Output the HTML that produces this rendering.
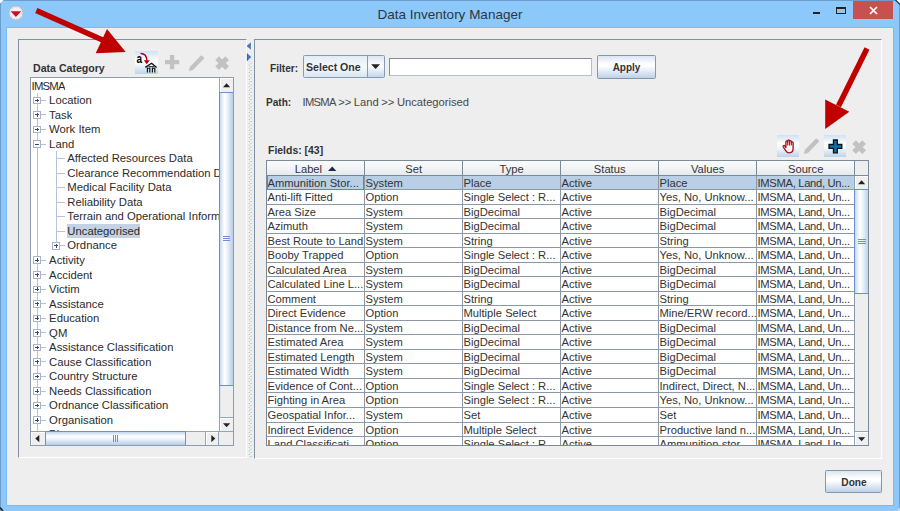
<!DOCTYPE html>
<html><head><meta charset="utf-8"><title>Data Inventory Manager</title>
<style>
html,body{margin:0;padding:0;}
body{width:900px;height:511px;overflow:hidden;background:#8dc8fa;font-family:"Liberation Sans",sans-serif;font-size:11.2px;color:#2b2b2b;}
#win{position:relative;width:900px;height:511px;overflow:hidden;background:#8dc8fa;}
.abs{position:absolute;background-clip:padding-box;}
.b{font-weight:bold;font-size:11.2px;white-space:nowrap;transform-origin:left center;}
.bt{display:inline-block;transform-origin:center center;}
#content{left:7px;top:28px;width:885.9px;height:476.5px;background:#eeeeee;box-shadow:0 0 0 1px #7fb8ee;}
.panel{border-top:1px solid #8090a4;border-left:1px solid #8090a4;border-right:1px solid #fff;border-bottom:1px solid #fff;box-sizing:border-box;}
.trow{position:absolute;left:0;height:14.53px;line-height:14.53px;white-space:nowrap;}
.tl{font-size:11.3px;position:absolute;height:14.53px;line-height:14.53px;white-space:nowrap;overflow:hidden;}
.btn{box-sizing:border-box;border:1px solid #8496ac;border-radius:1.5px;background:linear-gradient(#dbe6f2 0%,#ffffff 38%,#ffffff 46%,#bdd1e8 100%);text-align:center;font-weight:bold;color:#333;}
.ibtn{background:linear-gradient(#cfe0f2 0%,#ffffff 40%,#ffffff 50%,#bdd3ea 100%);}
.cell{position:absolute;height:14.53px;line-height:14.2px;white-space:nowrap;overflow:hidden;box-sizing:border-box;padding-left:0.8px;color:#333;}
.src{letter-spacing:-0.3px;}
.hd{position:absolute;height:14.8px;line-height:16px;text-align:center;color:#333;box-sizing:border-box;}
</style></head><body><div id="win">

<div class="abs" style="left:0;top:0;width:900px;height:511px;box-sizing:border-box;border:1px solid #6b9ccb;border-bottom:none;"></div>
<div class="abs" style="left:0;top:6.5px;width:900px;height:16px;line-height:16px;text-align:center;font-size:13.5px;color:#2c3642;">Data Inventory Manager</div>
<svg class="abs" style="left:8.3px;top:5.3px" width="16" height="16" viewBox="0 0 16 16"><circle cx="8" cy="8" r="7" fill="#f3f3f3" stroke="#b5b5b5" stroke-width="0.8"/><circle cx="8" cy="8" r="5.6" fill="none" stroke="#d0d0d0" stroke-width="1" stroke-dasharray="1.2 1.2"/><path d="M2.6 6.3 H13.2 L7.9 12.1 Z" fill="#c8102e"/></svg>
<div class="abs" style="left:812.7px;top:12px;width:7.3px;height:2px;background:#222;"></div>
<div class="abs" style="left:836px;top:6.5px;width:9.6px;height:7.5px;box-sizing:border-box;border:1px solid #222;border-top:2px solid #222;"></div>
<div class="abs" style="left:852.7px;top:0.5px;width:40.6px;height:18px;background:#c75050;"></div>
<svg class="abs" style="left:868.5px;top:6px" width="9" height="9" viewBox="0 0 9 9"><path d="M1 1 L8 8 M8 1 L1 8" stroke="#fff" stroke-width="1.7"/></svg>
<svg class="abs" style="left:0;top:0" width="900" height="511" viewBox="0 0 900 511"><path d="M0 0 H3.6 L0 3.6 Z" fill="#fff"/><path d="M900 0 H896.4 L900 3.6 Z" fill="#fff"/><path d="M895.5 0 L900 4.5" stroke="#333" stroke-width="1.2"/><path d="M0 507.5 L3 511" stroke="#222" stroke-width="1.6"/><path d="M900 507.5 L897 511 H900 Z" fill="#ccd6e0"/></svg>
<div id="content" class="abs"></div>
<div class="abs panel" style="left:18px;top:39px;width:229px;height:419px;"></div>
<div class="abs panel" style="left:254px;top:39px;width:627.5px;height:419.5px;"></div>
<svg class="abs" style="left:246px;top:40px" width="8" height="418" viewBox="0 0 8 418">
<defs><pattern id="dots" width="3.64" height="3.64" patternUnits="userSpaceOnUse"><rect x="0" y="0" width="0.95" height="0.95" fill="#ffffff"/><rect x="1.82" y="1.82" width="0.95" height="0.95" fill="#ffffff"/><rect x="0.91" y="0.91" width="0.95" height="0.95" fill="#8d98a8"/><rect x="2.73" y="2.73" width="0.95" height="0.95" fill="#8d98a8"/></pattern></defs>
<rect x="2.4" y="9.5" width="3.7" height="408" fill="url(#dots)"/>
<rect x="0.8" y="2.4" width="4.6" height="19" fill="#eeeeee"/>
<path d="M4.9 2.9 L4.9 9.8 L1 6.3 Z" fill="#4674c6"/><path d="M1.4 13.6 L1.4 20.8 L5.3 17.1 Z" fill="#4674c6"/>
<path d="M4.9 2.9 L1 6.3" stroke="#2a3a5a" stroke-width="0.7"/><path d="M1.4 13.6 L1.4 20.8" stroke="#2a3a5a" stroke-width="0.7"/></svg>
<div class="abs b" style="left:33.2px;top:60.6px;height:14px;line-height:14px;color:#333;transform:scaleX(0.946);">Data Category</div>
<div class="abs ibtn" style="left:134.8px;top:50.9px;width:23.2px;height:23.4px;"></div>
<svg class="abs" style="left:134.4px;top:50.9px" width="24" height="24" viewBox="0 0 24 24">
<text transform="translate(2.4 12) scale(0.8 1)" font-family="Liberation Sans, sans-serif" font-weight="bold" font-size="12.5" fill="#000">a</text>
<path d="M6.6 2.4 C10.6 2.3 12.9 5.2 12.9 9.6" stroke="#b3000c" stroke-width="1.5" fill="none"/>
<path d="M9.8 9.2 L15.8 9.2 L12.7 13.2 Z" fill="#b3000c"/>
<path d="M11.3 16.4 L17.6 12.3 L22.6 16.4" stroke="#111" stroke-width="1.3" fill="none"/>
<path d="M14.6 15.6 H20.2" stroke="#111" stroke-width="0.9"/>
<path d="M13.4 16.6 V21.4 M15.8 16.6 V21.4 M18.4 16.6 V21.4 M20.8 16.6 V21.4 M13.4 17.2 H15.8 M18.4 17.2 H20.8" stroke="#111" stroke-width="1.15" fill="none"/>
</svg>
<svg class="abs" style="left:164.8px;top:55.3px;overflow:visible" width="14.2" height="14.2"><path d="M4.97 0.00 L9.23 0.00 L9.23 4.97 L14.20 4.97 L14.20 9.23 L9.23 9.23 L9.23 14.20 L4.97 14.20 L4.97 9.23 L0.00 9.23 L0.00 4.97 L4.97 4.97 Z" fill="#c2c2c2"/></svg>
<svg class="abs" style="left:188.9px;top:70.7px;overflow:visible" width="2" height="2"><path d="M0 0 L3.4 -2.20 L19.20 -2.20 Q20.00 -2.20 20.00 -1.40 L20.00 1.40 Q20.00 2.20 19.20 2.20 L3.4 2.20 Z" fill="#c2c2c2" transform="rotate(-46)"/></svg>
<svg class="abs" style="left:215.2px;top:55.6px;overflow:visible" width="14.2" height="14.2"><path d="M4.56 0.00 L9.69 0.00 L9.69 4.56 L14.25 4.56 L14.25 9.69 L9.69 9.69 L9.69 14.25 L4.56 14.25 L4.56 9.69 L0.00 9.69 L0.00 4.56 L4.56 4.56 Z" fill="#c2c2c2" transform="rotate(45 7.12 7.12)"/></svg>
<div class="abs" style="left:30px;top:77.1px;width:204px;height:368.8px;box-sizing:border-box;border:1px solid #8c9db3;background:#fff;overflow:hidden;" id="treepane">
<div class="abs" style="left:0;top:0;width:187.8px;height:353.4px;overflow:hidden;">
<div class="abs" style="left:5.5px;top:15.08px;width:1px;height:360.00px;background:#b2c3dc;"></div>
<div class="abs" style="left:24.5px;top:73.20px;width:1px;height:94.44px;background:#b2c3dc;"></div>
<div class="tl" style="left:0.5px;top:0.55px;letter-spacing:-0.75px;">IMSMA</div>
<div class="tl" style="left:18.1px;top:15.08px;">Location</div>
<div class="abs" style="left:6.0px;top:21.84px;width:8.5px;height:1px;background:#b2c3dc;"></div>
<div class="abs" style="left:2.2px;top:18.54px;width:7.6px;height:7.6px;box-sizing:border-box;border:1px solid #a9b3c6;background:#fff;"></div>
<div class="abs" style="left:4.1px;top:21.84px;width:3.8px;height:1px;background:#36477c;"></div>
<div class="abs" style="left:5.5px;top:20.45px;width:1px;height:3.8px;background:#36477c;"></div>
<div class="tl" style="left:18.1px;top:29.61px;">Task</div>
<div class="abs" style="left:6.0px;top:36.38px;width:8.5px;height:1px;background:#b2c3dc;"></div>
<div class="abs" style="left:2.2px;top:33.08px;width:7.6px;height:7.6px;box-sizing:border-box;border:1px solid #a9b3c6;background:#fff;"></div>
<div class="abs" style="left:4.1px;top:36.38px;width:3.8px;height:1px;background:#36477c;"></div>
<div class="abs" style="left:5.5px;top:34.98px;width:1px;height:3.8px;background:#36477c;"></div>
<div class="tl" style="left:18.1px;top:44.14px;">Work Item</div>
<div class="abs" style="left:6.0px;top:50.90px;width:8.5px;height:1px;background:#b2c3dc;"></div>
<div class="abs" style="left:2.2px;top:47.60px;width:7.6px;height:7.6px;box-sizing:border-box;border:1px solid #a9b3c6;background:#fff;"></div>
<div class="abs" style="left:4.1px;top:50.90px;width:3.8px;height:1px;background:#36477c;"></div>
<div class="abs" style="left:5.5px;top:49.50px;width:1px;height:3.8px;background:#36477c;"></div>
<div class="tl" style="left:18.1px;top:58.67px;">Land</div>
<div class="abs" style="left:6.0px;top:65.43px;width:8.5px;height:1px;background:#b2c3dc;"></div>
<div class="abs" style="left:2.2px;top:62.13px;width:7.6px;height:7.6px;box-sizing:border-box;border:1px solid #a9b3c6;background:#fff;"></div>
<div class="abs" style="left:4.1px;top:65.43px;width:3.8px;height:1px;background:#36477c;"></div>
<div class="tl" style="left:36.3px;top:73.20px;">Affected Resources Data</div>
<div class="abs" style="left:25.0px;top:79.96px;width:9px;height:1px;background:#b2c3dc;"></div>
<div class="tl" style="left:36.3px;top:87.73px;">Clearance Recommendation Data</div>
<div class="abs" style="left:25.0px;top:94.49px;width:9px;height:1px;background:#b2c3dc;"></div>
<div class="tl" style="left:36.3px;top:102.26px;">Medical Facility Data</div>
<div class="abs" style="left:25.0px;top:109.02px;width:9px;height:1px;background:#b2c3dc;"></div>
<div class="tl" style="left:36.3px;top:116.79px;">Reliability Data</div>
<div class="abs" style="left:25.0px;top:123.55px;width:9px;height:1px;background:#b2c3dc;"></div>
<div class="tl" style="left:36.3px;top:131.32px;">Terrain and Operational Information</div>
<div class="abs" style="left:25.0px;top:138.08px;width:9px;height:1px;background:#b2c3dc;"></div>
<div class="tl" style="left:36.3px;top:145.85px; background:#c3d3e5;">Uncategorised</div>
<div class="abs" style="left:25.0px;top:152.61px;width:9px;height:1px;background:#b2c3dc;"></div>
<div class="tl" style="left:36.3px;top:160.38px;">Ordnance</div>
<div class="abs" style="left:25.0px;top:167.14px;width:9px;height:1px;background:#b2c3dc;"></div>
<div class="abs" style="left:21.2px;top:163.84px;width:7.6px;height:7.6px;box-sizing:border-box;border:1px solid #a9b3c6;background:#fff;"></div>
<div class="abs" style="left:23.1px;top:167.14px;width:3.8px;height:1px;background:#36477c;"></div>
<div class="abs" style="left:24.5px;top:165.74px;width:1px;height:3.8px;background:#36477c;"></div>
<div class="tl" style="left:18.1px;top:174.91px;">Activity</div>
<div class="abs" style="left:6.0px;top:181.67px;width:8.5px;height:1px;background:#b2c3dc;"></div>
<div class="abs" style="left:2.2px;top:178.37px;width:7.6px;height:7.6px;box-sizing:border-box;border:1px solid #a9b3c6;background:#fff;"></div>
<div class="abs" style="left:4.1px;top:181.67px;width:3.8px;height:1px;background:#36477c;"></div>
<div class="abs" style="left:5.5px;top:180.27px;width:1px;height:3.8px;background:#36477c;"></div>
<div class="tl" style="left:18.1px;top:189.44px;">Accident</div>
<div class="abs" style="left:6.0px;top:196.20px;width:8.5px;height:1px;background:#b2c3dc;"></div>
<div class="abs" style="left:2.2px;top:192.90px;width:7.6px;height:7.6px;box-sizing:border-box;border:1px solid #a9b3c6;background:#fff;"></div>
<div class="abs" style="left:4.1px;top:196.20px;width:3.8px;height:1px;background:#36477c;"></div>
<div class="abs" style="left:5.5px;top:194.80px;width:1px;height:3.8px;background:#36477c;"></div>
<div class="tl" style="left:18.1px;top:203.97px;">Victim</div>
<div class="abs" style="left:6.0px;top:210.73px;width:8.5px;height:1px;background:#b2c3dc;"></div>
<div class="abs" style="left:2.2px;top:207.43px;width:7.6px;height:7.6px;box-sizing:border-box;border:1px solid #a9b3c6;background:#fff;"></div>
<div class="abs" style="left:4.1px;top:210.73px;width:3.8px;height:1px;background:#36477c;"></div>
<div class="abs" style="left:5.5px;top:209.33px;width:1px;height:3.8px;background:#36477c;"></div>
<div class="tl" style="left:18.1px;top:218.50px;">Assistance</div>
<div class="abs" style="left:6.0px;top:225.26px;width:8.5px;height:1px;background:#b2c3dc;"></div>
<div class="abs" style="left:2.2px;top:221.96px;width:7.6px;height:7.6px;box-sizing:border-box;border:1px solid #a9b3c6;background:#fff;"></div>
<div class="abs" style="left:4.1px;top:225.26px;width:3.8px;height:1px;background:#36477c;"></div>
<div class="abs" style="left:5.5px;top:223.86px;width:1px;height:3.8px;background:#36477c;"></div>
<div class="tl" style="left:18.1px;top:233.03px;">Education</div>
<div class="abs" style="left:6.0px;top:239.79px;width:8.5px;height:1px;background:#b2c3dc;"></div>
<div class="abs" style="left:2.2px;top:236.49px;width:7.6px;height:7.6px;box-sizing:border-box;border:1px solid #a9b3c6;background:#fff;"></div>
<div class="abs" style="left:4.1px;top:239.79px;width:3.8px;height:1px;background:#36477c;"></div>
<div class="abs" style="left:5.5px;top:238.39px;width:1px;height:3.8px;background:#36477c;"></div>
<div class="tl" style="left:18.1px;top:247.56px;">QM</div>
<div class="abs" style="left:6.0px;top:254.32px;width:8.5px;height:1px;background:#b2c3dc;"></div>
<div class="abs" style="left:2.2px;top:251.02px;width:7.6px;height:7.6px;box-sizing:border-box;border:1px solid #a9b3c6;background:#fff;"></div>
<div class="abs" style="left:4.1px;top:254.32px;width:3.8px;height:1px;background:#36477c;"></div>
<div class="abs" style="left:5.5px;top:252.92px;width:1px;height:3.8px;background:#36477c;"></div>
<div class="tl" style="left:18.1px;top:262.09px;">Assistance Classification</div>
<div class="abs" style="left:6.0px;top:268.85px;width:8.5px;height:1px;background:#b2c3dc;"></div>
<div class="abs" style="left:2.2px;top:265.55px;width:7.6px;height:7.6px;box-sizing:border-box;border:1px solid #a9b3c6;background:#fff;"></div>
<div class="abs" style="left:4.1px;top:268.85px;width:3.8px;height:1px;background:#36477c;"></div>
<div class="abs" style="left:5.5px;top:267.45px;width:1px;height:3.8px;background:#36477c;"></div>
<div class="tl" style="left:18.1px;top:276.62px;">Cause Classification</div>
<div class="abs" style="left:6.0px;top:283.38px;width:8.5px;height:1px;background:#b2c3dc;"></div>
<div class="abs" style="left:2.2px;top:280.08px;width:7.6px;height:7.6px;box-sizing:border-box;border:1px solid #a9b3c6;background:#fff;"></div>
<div class="abs" style="left:4.1px;top:283.38px;width:3.8px;height:1px;background:#36477c;"></div>
<div class="abs" style="left:5.5px;top:281.99px;width:1px;height:3.8px;background:#36477c;"></div>
<div class="tl" style="left:18.1px;top:291.15px;">Country Structure</div>
<div class="abs" style="left:6.0px;top:297.91px;width:8.5px;height:1px;background:#b2c3dc;"></div>
<div class="abs" style="left:2.2px;top:294.61px;width:7.6px;height:7.6px;box-sizing:border-box;border:1px solid #a9b3c6;background:#fff;"></div>
<div class="abs" style="left:4.1px;top:297.91px;width:3.8px;height:1px;background:#36477c;"></div>
<div class="abs" style="left:5.5px;top:296.51px;width:1px;height:3.8px;background:#36477c;"></div>
<div class="tl" style="left:18.1px;top:305.68px;">Needs Classification</div>
<div class="abs" style="left:6.0px;top:312.44px;width:8.5px;height:1px;background:#b2c3dc;"></div>
<div class="abs" style="left:2.2px;top:309.14px;width:7.6px;height:7.6px;box-sizing:border-box;border:1px solid #a9b3c6;background:#fff;"></div>
<div class="abs" style="left:4.1px;top:312.44px;width:3.8px;height:1px;background:#36477c;"></div>
<div class="abs" style="left:5.5px;top:311.05px;width:1px;height:3.8px;background:#36477c;"></div>
<div class="tl" style="left:18.1px;top:320.21px;">Ordnance Classification</div>
<div class="abs" style="left:6.0px;top:326.97px;width:8.5px;height:1px;background:#b2c3dc;"></div>
<div class="abs" style="left:2.2px;top:323.67px;width:7.6px;height:7.6px;box-sizing:border-box;border:1px solid #a9b3c6;background:#fff;"></div>
<div class="abs" style="left:4.1px;top:326.97px;width:3.8px;height:1px;background:#36477c;"></div>
<div class="abs" style="left:5.5px;top:325.57px;width:1px;height:3.8px;background:#36477c;"></div>
<div class="tl" style="left:18.1px;top:334.74px;">Organisation</div>
<div class="abs" style="left:6.0px;top:341.50px;width:8.5px;height:1px;background:#b2c3dc;"></div>
<div class="abs" style="left:2.2px;top:338.20px;width:7.6px;height:7.6px;box-sizing:border-box;border:1px solid #a9b3c6;background:#fff;"></div>
<div class="abs" style="left:4.1px;top:341.50px;width:3.8px;height:1px;background:#36477c;"></div>
<div class="abs" style="left:5.5px;top:340.11px;width:1px;height:3.8px;background:#36477c;"></div>
<div class="tl" style="left:18.1px;top:349.27px;">Place</div>
<div class="abs" style="left:6.0px;top:356.03px;width:8.5px;height:1px;background:#b2c3dc;"></div>
<div class="abs" style="left:2.2px;top:352.73px;width:7.6px;height:7.6px;box-sizing:border-box;border:1px solid #a9b3c6;background:#fff;"></div>
<div class="abs" style="left:4.1px;top:356.03px;width:3.8px;height:1px;background:#36477c;"></div>
<div class="abs" style="left:5.5px;top:354.63px;width:1px;height:3.8px;background:#36477c;"></div>
</div>
<div class="abs" style="left:187.8px;top:0;width:14.4px;height:353.6px;background:#eeeeee;border-left:1px solid #93a3b8;box-sizing:border-box;box-shadow:inset 1px 0 0 #d5e0ee;"></div>
<div class="abs" style="left:187.8px;top:0;width:14.4px;height:14.4px;box-sizing:border-box;border:0 solid #93a3b8;box-shadow:inset 1px 1px 0 #fff;background:#efefef;border-left-width:1px;"></div>
<svg class="abs" style="left:191.8px;top:4.6px" width="8" height="5"><path d="M0 4.3 L3.6 0.3 L7.2 4.3 Z" fill="#222"/></svg>
<div class="abs" style="left:187.8px;top:14.4px;width:14.4px;height:293.6px;box-sizing:border-box;border:1px solid #6d8fd0;border-right:none;background:linear-gradient(90deg,#c3d7ee 0%,#ffffff 33%,#f4f8fc 48%,#b6cde7 100%);"></div>
<div class="abs" style="left:191.8px;top:158.4px;width:7px;height:1px;background:#6d8fd0;"></div>
<div class="abs" style="left:191.8px;top:160.4px;width:7px;height:1px;background:#6d8fd0;"></div>
<div class="abs" style="left:191.8px;top:162.4px;width:7px;height:1px;background:#6d8fd0;"></div>
<div class="abs" style="left:187.8px;top:339px;width:14.4px;height:14.6px;box-sizing:border-box;border:0 solid #93a3b8;box-shadow:inset 1px 1px 0 #fff;background:#efefef;border-left-width:1px;border-top-width:1px;"></div>
<svg class="abs" style="left:191.8px;top:344.8px" width="8" height="5"><path d="M0 0.3 L3.6 4.3 L7.2 0.3 Z" fill="#222"/></svg>
<div class="abs" style="left:0;top:353.4px;width:202.4px;height:14px;background:#eeeeee;border-top:1px solid #93a3b8;box-sizing:border-box;"></div>
<div class="abs" style="left:0;top:353.4px;width:13.6px;height:14px;box-sizing:border-box;border:0 solid #93a3b8;box-shadow:inset 1px 1px 0 #fff;background:#efefef;border-top-width:1px;"></div>
<svg class="abs" style="left:3.8px;top:357.0px" width="5" height="8"><path d="M4.3 0 L0.3 3.6 L4.3 7.2 Z" fill="#222"/></svg>
<div class="abs" style="left:13.6px;top:353.4px;width:141px;height:14px;box-sizing:border-box;border:1px solid #6d8fd0;border-bottom:none;background:linear-gradient(#c3d7ee 0%,#ffffff 33%,#f4f8fc 48%,#b6cde7 100%);"></div>
<div class="abs" style="left:82.2px;top:357.2px;width:1px;height:7px;background:#6d8fd0;"></div>
<div class="abs" style="left:84.2px;top:357.2px;width:1px;height:7px;background:#6d8fd0;"></div>
<div class="abs" style="left:86.2px;top:357.2px;width:1px;height:7px;background:#6d8fd0;"></div>
<div class="abs" style="left:173.6px;top:353.4px;width:14.6px;height:14px;box-sizing:border-box;border:0 solid #93a3b8;box-shadow:inset 1px 1px 0 #fff;background:#efefef;border-top-width:1px;border-left-width:1px;border-right-width:1px;"></div>
<svg class="abs" style="left:180px;top:357.0px" width="5" height="8"><path d="M0.3 0 L4.3 3.6 L0.3 7.2 Z" fill="#222"/></svg>
</div>
<div class="abs b" style="left:270px;top:61px;height:14px;line-height:14px;color:#333;transform:scaleX(0.906);">Filter:</div>
<div class="abs btn" style="left:302.7px;top:55.1px;width:82.3px;height:22.8px;border-color:#869ab5;background:linear-gradient(#e2ebf5 0%,#f6f9fc 50%,#d9e5f2 100%);"></div>
<div class="abs" style="left:366.5px;top:56.1px;width:17.5px;height:20.8px;border-left:1px solid #869ab5;background:linear-gradient(#dbe6f2 0%,#ffffff 45%,#c4d6ea 100%);box-sizing:border-box;"></div>
<div class="abs b" style="left:306.1px;top:60px;height:14px;line-height:14px;color:#333;transform:scaleX(0.946);">Select One</div>
<svg class="abs" style="left:370.9px;top:64.3px" width="10" height="6"><path d="M0.1 0.2 L9.1 0.2 L4.6 5 Z" fill="#222"/></svg>
<div class="abs" style="left:389px;top:57.8px;width:203px;height:17.8px;box-sizing:border-box;border:1px solid #7f8fa2;border-bottom:1.4px solid #b3c0d0;border-right-color:#b3c0d0;background:#fff;"></div>
<div class="abs btn" style="left:597.2px;top:55.3px;width:59px;height:23.4px;line-height:22.6px;font-size:11.2px;"><span class="bt" style="transform:scaleX(0.894)">Apply</span></div>
<div class="abs b" style="left:266px;top:95.4px;height:14px;line-height:14px;color:#333;transform:scaleX(0.9);">Path:</div>
<div class="abs" style="left:302.5px;top:95.4px;height:14px;line-height:14px;color:#484848;word-spacing:-0.55px;"><span style="letter-spacing:-0.7px">IMSMA</span> &gt;&gt; Land &gt;&gt; Uncategorised</div>
<div class="abs b" style="left:268px;top:143.4px;height:14px;line-height:14px;color:#333;transform:scaleX(0.934);">Fields: [43]</div>
<div class="abs ibtn" style="left:777px;top:135.2px;width:22px;height:21.8px;"></div>
<svg class="abs" style="left:781.6px;top:138.6px" width="14" height="15" viewBox="0 0 14 15">
<path d="M3.9 8.6 V3 Q3.9 2 4.8 2 Q5.7 2 5.7 3 V1.9 Q5.7 0.9 6.6 0.9 Q7.5 0.9 7.5 1.9 V2.5 Q7.5 1.6 8.4 1.6 Q9.3 1.6 9.3 2.5 V3.7 Q9.3 2.8 10.2 2.8 Q11.1 2.8 11.1 3.8 V9.6 Q11.1 13.8 7.4 13.8 Q5.0 13.8 3.7 11.6 L1.3 8 Q0.8 7 1.7 6.6 Q2.5 6.3 3.1 7.2 Z" fill="#fff" stroke="#a81318" stroke-width="1.35" stroke-linejoin="round"/>
<path d="M5.7 3 V6.6 M7.5 2.5 V6.6 M9.3 3.7 V6.6" stroke="#a81318" stroke-width="1.1"/></svg>
<svg class="abs" style="left:803.7px;top:153.8px;overflow:visible" width="2" height="2"><path d="M0 0 L3.4 -2.20 L19.20 -2.20 Q20.00 -2.20 20.00 -1.40 L20.00 1.40 Q20.00 2.20 19.20 2.20 L3.4 2.20 Z" fill="#c2c2c2" transform="rotate(-46)"/></svg>
<div class="abs ibtn" style="left:824.3px;top:135.2px;width:22px;height:21.8px;"></div>
<svg class="abs" style="left:828.6px;top:139.6px;overflow:visible" width="12.8" height="12.8"><path d="M4.48 0.00 L8.32 0.00 L8.32 4.48 L12.80 4.48 L12.80 8.32 L8.32 8.32 L8.32 12.80 L4.48 12.80 L4.48 8.32 L0.00 8.32 L0.00 4.48 L4.48 4.48 Z" fill="#0c70aa" stroke="#111" stroke-width="1.3" stroke-linejoin="miter"/></svg>
<svg class="abs" style="left:852.2px;top:139.5px;overflow:visible" width="14.2" height="14.2"><path d="M4.54 0.00 L9.66 0.00 L9.66 4.54 L14.20 4.54 L14.20 9.66 L9.66 9.66 L9.66 14.20 L4.54 14.20 L4.54 9.66 L0.00 9.66 L0.00 4.54 L4.54 4.54 Z" fill="#c2c2c2" transform="rotate(45 7.10 7.10)"/></svg>
<div class="abs" style="left:265.7px;top:160.0px;width:603.4px;height:285.7px;box-sizing:border-box;border:1px solid #7a8a99;background:#fff;overflow:hidden;">
<div class="abs" style="left:0;top:0;width:603px;height:14.8px;background:#eeeeee;border-bottom:1px solid #7a8a99;box-sizing:border-box;"></div>
<div class="abs" style="left:0;top:0;width:588.0px;height:14.8px;background:linear-gradient(#fbfbfb 0%,#f1f3f5 55%,#e6e9ee 100%);border-bottom:1px solid #7a8a99;box-sizing:border-box;"></div>
<div class="hd" style="left:0.0px;top:0;width:98.0px;">Label <svg width="9" height="6" style="vertical-align:1.5px;margin-left:2.5px"><path d="M0 5 L4.2 0.5 L8.4 5 Z" fill="#1c2c40"/></svg></div>
<div class="abs" style="left:97.0px;top:0;width:1px;height:14.8px;background:#7a8a99;"></div>
<div class="hd" style="left:98.0px;top:0;width:98.0px;">Set</div>
<div class="abs" style="left:195.0px;top:0;width:1px;height:14.8px;background:#7a8a99;"></div>
<div class="hd" style="left:196.0px;top:0;width:98.0px;">Type</div>
<div class="abs" style="left:293.0px;top:0;width:1px;height:14.8px;background:#7a8a99;"></div>
<div class="hd" style="left:294.0px;top:0;width:98.0px;">Status</div>
<div class="abs" style="left:391.0px;top:0;width:1px;height:14.8px;background:#7a8a99;"></div>
<div class="hd" style="left:392.0px;top:0;width:98.0px;">Values</div>
<div class="abs" style="left:489.0px;top:0;width:1px;height:14.8px;background:#7a8a99;"></div>
<div class="hd" style="left:490.0px;top:0;width:98.0px;">Source</div>
<div class="abs" style="left:587.0px;top:0;width:1px;height:14.8px;background:#7a8a99;"></div>
<div class="abs" style="left:0;top:14.50px;width:588.0px;height:14.53px;background:#b8cfe5;"></div>
<div class="cell" style="left:0.0px;top:14.50px;width:97.0px;">Ammunition Stor...</div>
<div class="cell" style="left:98.0px;top:14.50px;width:97.0px;">System</div>
<div class="cell" style="left:196.0px;top:14.50px;width:97.0px;">Place</div>
<div class="cell" style="left:294.0px;top:14.50px;width:97.0px;">Active</div>
<div class="cell" style="left:392.0px;top:14.50px;width:97.0px;">Place</div>
<div class="cell src" style="left:490.0px;top:14.50px;width:97.0px;">IMSMA, Land, Un...</div>
<div class="abs" style="left:0;top:28.03px;width:588.0px;height:1px;background:#8a98a8;"></div>
<div class="cell" style="left:0.0px;top:29.03px;width:97.0px;">Anti-lift Fitted</div>
<div class="cell" style="left:98.0px;top:29.03px;width:97.0px;">Option</div>
<div class="cell" style="left:196.0px;top:29.03px;width:97.0px;">Single Select : R...</div>
<div class="cell" style="left:294.0px;top:29.03px;width:97.0px;">Active</div>
<div class="cell" style="left:392.0px;top:29.03px;width:97.0px;">Yes, No, Unknow...</div>
<div class="cell src" style="left:490.0px;top:29.03px;width:97.0px;">IMSMA, Land, Un...</div>
<div class="abs" style="left:0;top:42.56px;width:588.0px;height:1px;background:#8a98a8;"></div>
<div class="cell" style="left:0.0px;top:43.56px;width:97.0px;">Area Size</div>
<div class="cell" style="left:98.0px;top:43.56px;width:97.0px;">System</div>
<div class="cell" style="left:196.0px;top:43.56px;width:97.0px;">BigDecimal</div>
<div class="cell" style="left:294.0px;top:43.56px;width:97.0px;">Active</div>
<div class="cell" style="left:392.0px;top:43.56px;width:97.0px;">BigDecimal</div>
<div class="cell src" style="left:490.0px;top:43.56px;width:97.0px;">IMSMA, Land, Un...</div>
<div class="abs" style="left:0;top:57.09px;width:588.0px;height:1px;background:#8a98a8;"></div>
<div class="cell" style="left:0.0px;top:58.09px;width:97.0px;">Azimuth</div>
<div class="cell" style="left:98.0px;top:58.09px;width:97.0px;">System</div>
<div class="cell" style="left:196.0px;top:58.09px;width:97.0px;">BigDecimal</div>
<div class="cell" style="left:294.0px;top:58.09px;width:97.0px;">Active</div>
<div class="cell" style="left:392.0px;top:58.09px;width:97.0px;">BigDecimal</div>
<div class="cell src" style="left:490.0px;top:58.09px;width:97.0px;">IMSMA, Land, Un...</div>
<div class="abs" style="left:0;top:71.62px;width:588.0px;height:1px;background:#8a98a8;"></div>
<div class="cell" style="left:0.0px;top:72.62px;width:97.0px;">Best Route to Land</div>
<div class="cell" style="left:98.0px;top:72.62px;width:97.0px;">System</div>
<div class="cell" style="left:196.0px;top:72.62px;width:97.0px;">String</div>
<div class="cell" style="left:294.0px;top:72.62px;width:97.0px;">Active</div>
<div class="cell" style="left:392.0px;top:72.62px;width:97.0px;">String</div>
<div class="cell src" style="left:490.0px;top:72.62px;width:97.0px;">IMSMA, Land, Un...</div>
<div class="abs" style="left:0;top:86.15px;width:588.0px;height:1px;background:#8a98a8;"></div>
<div class="cell" style="left:0.0px;top:87.15px;width:97.0px;">Booby Trapped</div>
<div class="cell" style="left:98.0px;top:87.15px;width:97.0px;">Option</div>
<div class="cell" style="left:196.0px;top:87.15px;width:97.0px;">Single Select : R...</div>
<div class="cell" style="left:294.0px;top:87.15px;width:97.0px;">Active</div>
<div class="cell" style="left:392.0px;top:87.15px;width:97.0px;">Yes, No, Unknow...</div>
<div class="cell src" style="left:490.0px;top:87.15px;width:97.0px;">IMSMA, Land, Un...</div>
<div class="abs" style="left:0;top:100.68px;width:588.0px;height:1px;background:#8a98a8;"></div>
<div class="cell" style="left:0.0px;top:101.68px;width:97.0px;">Calculated Area</div>
<div class="cell" style="left:98.0px;top:101.68px;width:97.0px;">System</div>
<div class="cell" style="left:196.0px;top:101.68px;width:97.0px;">BigDecimal</div>
<div class="cell" style="left:294.0px;top:101.68px;width:97.0px;">Active</div>
<div class="cell" style="left:392.0px;top:101.68px;width:97.0px;">BigDecimal</div>
<div class="cell src" style="left:490.0px;top:101.68px;width:97.0px;">IMSMA, Land, Un...</div>
<div class="abs" style="left:0;top:115.21px;width:588.0px;height:1px;background:#8a98a8;"></div>
<div class="cell" style="left:0.0px;top:116.21px;width:97.0px;">Calculated Line L...</div>
<div class="cell" style="left:98.0px;top:116.21px;width:97.0px;">System</div>
<div class="cell" style="left:196.0px;top:116.21px;width:97.0px;">BigDecimal</div>
<div class="cell" style="left:294.0px;top:116.21px;width:97.0px;">Active</div>
<div class="cell" style="left:392.0px;top:116.21px;width:97.0px;">BigDecimal</div>
<div class="cell src" style="left:490.0px;top:116.21px;width:97.0px;">IMSMA, Land, Un...</div>
<div class="abs" style="left:0;top:129.74px;width:588.0px;height:1px;background:#8a98a8;"></div>
<div class="cell" style="left:0.0px;top:130.74px;width:97.0px;">Comment</div>
<div class="cell" style="left:98.0px;top:130.74px;width:97.0px;">System</div>
<div class="cell" style="left:196.0px;top:130.74px;width:97.0px;">String</div>
<div class="cell" style="left:294.0px;top:130.74px;width:97.0px;">Active</div>
<div class="cell" style="left:392.0px;top:130.74px;width:97.0px;">String</div>
<div class="cell src" style="left:490.0px;top:130.74px;width:97.0px;">IMSMA, Land, Un...</div>
<div class="abs" style="left:0;top:144.27px;width:588.0px;height:1px;background:#8a98a8;"></div>
<div class="cell" style="left:0.0px;top:145.27px;width:97.0px;">Direct Evidence</div>
<div class="cell" style="left:98.0px;top:145.27px;width:97.0px;">Option</div>
<div class="cell" style="left:196.0px;top:145.27px;width:97.0px;">Multiple Select</div>
<div class="cell" style="left:294.0px;top:145.27px;width:97.0px;">Active</div>
<div class="cell" style="left:392.0px;top:145.27px;width:97.0px;">Mine/ERW record...</div>
<div class="cell src" style="left:490.0px;top:145.27px;width:97.0px;">IMSMA, Land, Un...</div>
<div class="abs" style="left:0;top:158.80px;width:588.0px;height:1px;background:#8a98a8;"></div>
<div class="cell" style="left:0.0px;top:159.80px;width:97.0px;">Distance from Ne...</div>
<div class="cell" style="left:98.0px;top:159.80px;width:97.0px;">System</div>
<div class="cell" style="left:196.0px;top:159.80px;width:97.0px;">BigDecimal</div>
<div class="cell" style="left:294.0px;top:159.80px;width:97.0px;">Active</div>
<div class="cell" style="left:392.0px;top:159.80px;width:97.0px;">BigDecimal</div>
<div class="cell src" style="left:490.0px;top:159.80px;width:97.0px;">IMSMA, Land, Un...</div>
<div class="abs" style="left:0;top:173.33px;width:588.0px;height:1px;background:#8a98a8;"></div>
<div class="cell" style="left:0.0px;top:174.33px;width:97.0px;">Estimated Area</div>
<div class="cell" style="left:98.0px;top:174.33px;width:97.0px;">System</div>
<div class="cell" style="left:196.0px;top:174.33px;width:97.0px;">BigDecimal</div>
<div class="cell" style="left:294.0px;top:174.33px;width:97.0px;">Active</div>
<div class="cell" style="left:392.0px;top:174.33px;width:97.0px;">BigDecimal</div>
<div class="cell src" style="left:490.0px;top:174.33px;width:97.0px;">IMSMA, Land, Un...</div>
<div class="abs" style="left:0;top:187.86px;width:588.0px;height:1px;background:#8a98a8;"></div>
<div class="cell" style="left:0.0px;top:188.86px;width:97.0px;">Estimated Length</div>
<div class="cell" style="left:98.0px;top:188.86px;width:97.0px;">System</div>
<div class="cell" style="left:196.0px;top:188.86px;width:97.0px;">BigDecimal</div>
<div class="cell" style="left:294.0px;top:188.86px;width:97.0px;">Active</div>
<div class="cell" style="left:392.0px;top:188.86px;width:97.0px;">BigDecimal</div>
<div class="cell src" style="left:490.0px;top:188.86px;width:97.0px;">IMSMA, Land, Un...</div>
<div class="abs" style="left:0;top:202.39px;width:588.0px;height:1px;background:#8a98a8;"></div>
<div class="cell" style="left:0.0px;top:203.39px;width:97.0px;">Estimated Width</div>
<div class="cell" style="left:98.0px;top:203.39px;width:97.0px;">System</div>
<div class="cell" style="left:196.0px;top:203.39px;width:97.0px;">BigDecimal</div>
<div class="cell" style="left:294.0px;top:203.39px;width:97.0px;">Active</div>
<div class="cell" style="left:392.0px;top:203.39px;width:97.0px;">BigDecimal</div>
<div class="cell src" style="left:490.0px;top:203.39px;width:97.0px;">IMSMA, Land, Un...</div>
<div class="abs" style="left:0;top:216.92px;width:588.0px;height:1px;background:#8a98a8;"></div>
<div class="cell" style="left:0.0px;top:217.92px;width:97.0px;">Evidence of Cont...</div>
<div class="cell" style="left:98.0px;top:217.92px;width:97.0px;">Option</div>
<div class="cell" style="left:196.0px;top:217.92px;width:97.0px;">Single Select : R...</div>
<div class="cell" style="left:294.0px;top:217.92px;width:97.0px;">Active</div>
<div class="cell" style="left:392.0px;top:217.92px;width:97.0px;">Indirect, Direct, N...</div>
<div class="cell src" style="left:490.0px;top:217.92px;width:97.0px;">IMSMA, Land, Un...</div>
<div class="abs" style="left:0;top:231.45px;width:588.0px;height:1px;background:#8a98a8;"></div>
<div class="cell" style="left:0.0px;top:232.45px;width:97.0px;">Fighting in Area</div>
<div class="cell" style="left:98.0px;top:232.45px;width:97.0px;">Option</div>
<div class="cell" style="left:196.0px;top:232.45px;width:97.0px;">Single Select : R...</div>
<div class="cell" style="left:294.0px;top:232.45px;width:97.0px;">Active</div>
<div class="cell" style="left:392.0px;top:232.45px;width:97.0px;">Yes, No, Unknow...</div>
<div class="cell src" style="left:490.0px;top:232.45px;width:97.0px;">IMSMA, Land, Un...</div>
<div class="abs" style="left:0;top:245.98px;width:588.0px;height:1px;background:#8a98a8;"></div>
<div class="cell" style="left:0.0px;top:246.98px;width:97.0px;">Geospatial Infor...</div>
<div class="cell" style="left:98.0px;top:246.98px;width:97.0px;">System</div>
<div class="cell" style="left:196.0px;top:246.98px;width:97.0px;">Set</div>
<div class="cell" style="left:294.0px;top:246.98px;width:97.0px;">Active</div>
<div class="cell" style="left:392.0px;top:246.98px;width:97.0px;">Set</div>
<div class="cell src" style="left:490.0px;top:246.98px;width:97.0px;">IMSMA, Land, Un...</div>
<div class="abs" style="left:0;top:260.51px;width:588.0px;height:1px;background:#8a98a8;"></div>
<div class="cell" style="left:0.0px;top:261.51px;width:97.0px;">Indirect Evidence</div>
<div class="cell" style="left:98.0px;top:261.51px;width:97.0px;">Option</div>
<div class="cell" style="left:196.0px;top:261.51px;width:97.0px;">Multiple Select</div>
<div class="cell" style="left:294.0px;top:261.51px;width:97.0px;">Active</div>
<div class="cell" style="left:392.0px;top:261.51px;width:97.0px;">Productive land n...</div>
<div class="cell src" style="left:490.0px;top:261.51px;width:97.0px;">IMSMA, Land, Un...</div>
<div class="abs" style="left:0;top:275.04px;width:588.0px;height:1px;background:#8a98a8;"></div>
<div class="cell" style="left:0.0px;top:276.04px;width:97.0px;">Land Classificati...</div>
<div class="cell" style="left:98.0px;top:276.04px;width:97.0px;">Option</div>
<div class="cell" style="left:196.0px;top:276.04px;width:97.0px;">Single Select : R...</div>
<div class="cell" style="left:294.0px;top:276.04px;width:97.0px;">Active</div>
<div class="cell" style="left:392.0px;top:276.04px;width:97.0px;">Ammunition stor...</div>
<div class="cell src" style="left:490.0px;top:276.04px;width:97.0px;">IMSMA, Land, Un...</div>
<div class="abs" style="left:0;top:289.57px;width:588.0px;height:1px;background:#8a98a8;"></div>
<div class="abs" style="left:97.0px;top:14.5px;width:1px;height:272px;background:#8a98a8;"></div>
<div class="abs" style="left:195.0px;top:14.5px;width:1px;height:272px;background:#8a98a8;"></div>
<div class="abs" style="left:293.0px;top:14.5px;width:1px;height:272px;background:#8a98a8;"></div>
<div class="abs" style="left:391.0px;top:14.5px;width:1px;height:272px;background:#8a98a8;"></div>
<div class="abs" style="left:489.0px;top:14.5px;width:1px;height:272px;background:#8a98a8;"></div>
<div class="abs" style="left:587.0px;top:14.5px;width:1px;height:272px;background:#8a98a8;"></div>
<div class="abs" style="left:0;top:14.0px;width:97.5px;height:14.5px;box-sizing:border-box;border:1px solid #6382bf;"></div>
<div class="abs" style="left:588.0px;top:14.5px;width:14.6px;height:270px;background:#eeeeee;"></div>
<div class="abs" style="left:587.0px;top:14.5px;width:15.6px;height:13.8px;box-sizing:border-box;border:0 solid #93a3b8;box-shadow:inset 1px 1px 0 #fff;background:#efefef;border-left-width:1px;"></div>
<svg class="abs" style="left:591.0px;top:19.2px" width="8" height="5"><path d="M0 4.3 L3.6 0.3 L7.2 4.3 Z" fill="#222"/></svg>
<div class="abs" style="left:587.0px;top:28.3px;width:15.6px;height:104.4px;box-sizing:border-box;border:1px solid #6d8fd0;border-right:none;background:linear-gradient(90deg,#c3d7ee 0%,#ffffff 33%,#f4f8fc 48%,#b6cde7 100%);"></div>
<div class="abs" style="left:591.4px;top:78.3px;width:8px;height:1px;background:#6d8fd0;"></div>
<div class="abs" style="left:591.4px;top:80.3px;width:8px;height:1px;background:#6d8fd0;"></div>
<div class="abs" style="left:591.4px;top:82.3px;width:8px;height:1px;background:#6d8fd0;"></div>
<div class="abs" style="left:587.0px;top:270px;width:15.6px;height:14.6px;box-sizing:border-box;border:0 solid #93a3b8;box-shadow:inset 1px 1px 0 #fff;background:#efefef;border-left-width:1px;border-top-width:1px;"></div>
<svg class="abs" style="left:591.0px;top:275.5px" width="8" height="5"><path d="M0 0.3 L3.6 4.3 L7.2 0.3 Z" fill="#222"/></svg>
</div>
<div class="abs btn" style="left:825px;top:469.9px;width:57px;height:23.4px;line-height:22.5px;font-size:11.2px;"><span class="bt" style="transform:scaleX(0.907)">Done</span></div>
<svg class="abs" style="left:0;top:0;pointer-events:none" width="900" height="511" viewBox="0 0 900 511">
<path d="M36.3 10.5 L106 41.5" stroke="#c00000" stroke-width="5.6"/>
<path d="M95.7 53.3 L107 29 L125.7 52 Z" fill="#c00000"/>
<path d="M867 48.5 L838.5 106" stroke="#c00000" stroke-width="5.5"/>
<path d="M825.2 99.6 L849.3 111.7 L825.2 129 Z" fill="#c00000"/>
</svg>
</div></body></html>
